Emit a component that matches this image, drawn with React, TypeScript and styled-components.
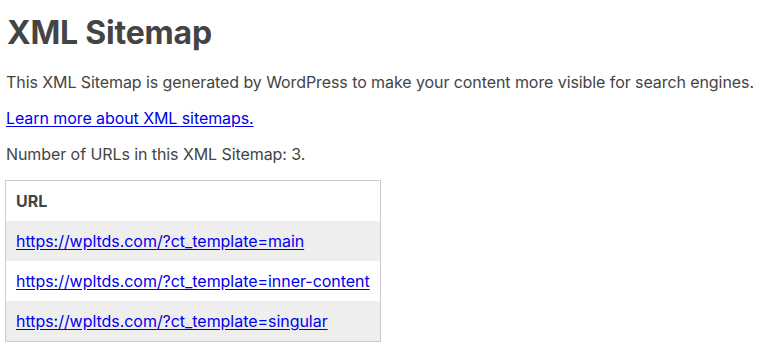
import * as React from "react";
import styled, { createGlobalStyle } from "styled-components";

const GlobalStyle = createGlobalStyle`
  body {
    margin: 0;
    background: #fff;
    color: #444;
    font-family: Inter, "Noto Sans", sans-serif;
  }
`;

const Sitemap = styled.div`
  padding: 0 5px;
  max-width: 980px;
`;

const Title = styled.h1`
  font-size: 32px;
  font-weight: 700;
  line-height: 39px;
  margin: 13px 0 0 2px;
  letter-spacing: -0.2px;
`;

const Text = styled.p<{ $first?: boolean }>`
  font-size: 16px;
  line-height: 20px;
  letter-spacing: -0.08px;
  margin: ${({ $first }) => ($first ? "20px" : "16px")} 0 0 1px;
`;

const Link = styled.a`
  color: #0000ee;
  text-decoration: underline;
  text-underline-offset: 2px;
`;

const Table = styled.table`
  margin-top: 16px;
  border: 1px solid #ccc;
  border-collapse: separate;
  border-spacing: 0;
  font-size: 16px;
  line-height: 20px;
  letter-spacing: -0.04px;
`;

const HeadCell = styled.th`
  text-align: left;
  padding: 10px;
  font-weight: 700;
`;

const Row = styled.tr<{ $odd: boolean }>`
  background: ${({ $odd }) => ($odd ? "#eee" : "#fff")};
`;

const Cell = styled.td`
  padding: 10px;
  direction: ltr;
`;

const urls = [
  "https://wpltds.com/?ct_template=main",
  "https://wpltds.com/?ct_template=inner-content",
  "https://wpltds.com/?ct_template=singular",
];

export default function App() {
  return (
    <>
      <GlobalStyle />
      <Sitemap>
        <Title>XML Sitemap</Title>
        <Text $first>
          This XML Sitemap is generated by WordPress to make your content more
          visible for search engines.
        </Text>
        <Text>
          <Link href="#">Learn more about XML sitemaps.</Link>
        </Text>
        <Text>Number of URLs in this XML Sitemap: {urls.length}.</Text>
        <Table>
          <thead>
            <tr>
              <HeadCell>URL</HeadCell>
            </tr>
          </thead>
          <tbody>
            {urls.map((url, i) => (
              <Row key={url} $odd={i % 2 === 0}>
                <Cell>
                  <Link href="#">{url}</Link>
                </Cell>
              </Row>
            ))}
          </tbody>
        </Table>
      </Sitemap>
    </>
  );
}
